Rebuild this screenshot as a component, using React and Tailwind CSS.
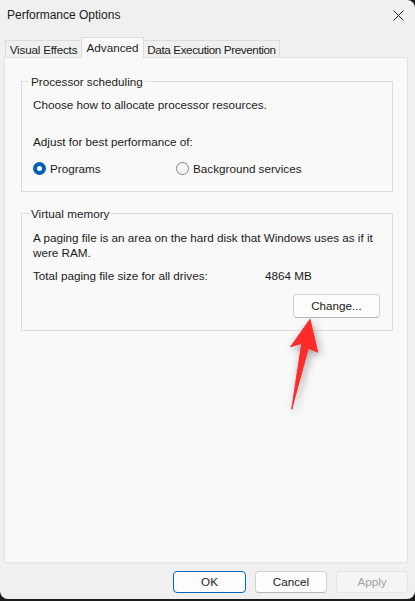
const font = { fontFamily: '"Liberation Sans", Arial, sans-serif' };

function Radio({ checked, label, className = '' }) {
  return (
    <label className={`flex items-center gap-[4px] ${className}`}>
      {checked ? (
        <span className="flex h-[13px] w-[13px] items-center justify-center rounded-full bg-[#005fb8]">
          <span className="h-[5px] w-[5px] rounded-full bg-white" />
        </span>
      ) : (
        <span className="h-[13px] w-[13px] rounded-full border border-[#868686] bg-[#f5f5f5]" />
      )}
      <span>{label}</span>
    </label>
  );
}

function GroupBox({ title, children, className = '' }) {
  return (
    <fieldset className={`mx-[16px] w-[372px] border border-[#dcdcdc] pl-[11px] pr-[12px] ${className}`}>
      <legend className="ml-[-4px] px-[2px] leading-[15px]">{title}</legend>
      {children}
    </fieldset>
  );
}

function DialogButton({ children, primary, disabled, className = '' }) {
  let look = 'border-[#d1d1d1] border-b-[#b5b5b5] bg-[#fdfdfd] text-[#1b1b1b]';
  if (primary) look = 'border-[#0067c0] bg-[#fdfdfd] text-[#1b1b1b]';
  if (disabled) look = 'border-[#e5e5e5] bg-[#f5f5f5] text-[#a0a0a0]';
  return (
    <button className={`flex items-center justify-center rounded-[4px] border ${look} ${className}`}>
      {children}
    </button>
  );
}

export default function App() {
  return (
    <div className="min-h-screen bg-[#1c1c1c]" style={font}>
      <div className="relative flex h-[599px] w-[415px] flex-col rounded-tr-[8px] rounded-b-[8px] bg-[#f0f0f0] text-[11.7px] text-[#1b1b1b]">
        {/* title bar */}
        <div className="flex h-[30px] items-center justify-between pl-[7px] pr-[10px]">
          <span className="text-[12px]">Performance Options</span>
          <svg width="11" height="11" viewBox="0 0 11 11" className="mr-[1px]">
            <path d="M0.5 0.5 L10.5 10.5 M10.5 0.5 L0.5 10.5" stroke="#1b1b1b" strokeWidth="1" />
          </svg>
        </div>

        {/* tabs */}
        <div className="flex h-[27px] items-end whitespace-nowrap pl-[5px]">
          <div className="flex h-[17px] w-[77px] items-center justify-center border border-b-0 border-[#dcdcdc] bg-[#f0f0f0] pt-[1px] tracking-[-0.2px]">
            Visual Effects
          </div>
          <div className="relative z-10 -mb-px -ml-px flex h-[21px] w-[63px] items-start justify-center border border-b-0 border-[#dcdcdc] bg-[#f9f9f9] pt-[2px] leading-[15px]">
            Advanced
          </div>
          <div className="-ml-px flex h-[17px] w-[137px] items-center justify-center border border-b-0 border-[#dcdcdc] bg-[#f0f0f0] pt-[1px] tracking-[-0.4px]">
            Data Execution Prevention
          </div>
        </div>

        {/* panel */}
        <div className="ml-[4px] h-[506px] w-[404px] border border-[#e3e3e3] bg-[#f9f9f9] pt-[16px]">
          <GroupBox title="Processor scheduling" className="pb-[15px]">
            <p className="mt-[8px] leading-[15px]">Choose how to allocate processor resources.</p>
            <p className="mt-[22px] leading-[15px]">Adjust for best performance of:</p>
            <div className="mt-[12px] flex h-[15px] items-center">
              <Radio checked label="Programs" className="w-[143px]" />
              <Radio label="Background services" />
            </div>
          </GroupBox>

          <GroupBox title="Virtual memory" className="mt-[14px] pb-[12px]">
            <p className="mt-[9px] leading-[15px]">
              <span className="whitespace-nowrap">A paging file is an area on the hard disk that Windows uses as if it</span>
              <br />
              were RAM.
            </p>
            <div className="mt-[8px] flex leading-[15px]">
              <span className="w-[232px]">Total paging file size for all drives:</span>
              <span>4864 MB</span>
            </div>
            <div className="mt-[11px] flex justify-end">
              <DialogButton className="h-[24px] w-[87px]">Change...</DialogButton>
            </div>
          </GroupBox>
        </div>

        {/* bottom buttons */}
        <div className="mt-[8px] flex justify-end gap-[9px] pr-[7px]">
          <DialogButton primary className="h-[22px] w-[73px]">OK</DialogButton>
          <DialogButton className="h-[22px] w-[72px]">Cancel</DialogButton>
          <DialogButton disabled className="h-[22px] w-[72px]">Apply</DialogButton>
        </div>

        {/* annotation arrow */}
        <svg
          className="absolute left-[280px] top-[310px] drop-shadow-[2px_3px_4px_rgba(0,0,0,0.35)]"
          width="50"
          height="110"
          viewBox="0 0 50 110"
        >
          <path
            d="M30 9.3 L37.7 42.3 L28.3 38.3 L11.7 99.3 L21.7 33.3 L10.7 36.7 Z"
            fill="#ff2b2b"
            stroke="#ff2b2b"
            strokeWidth="1"
            strokeLinejoin="round"
          />
        </svg>
      </div>
    </div>
  );
}
